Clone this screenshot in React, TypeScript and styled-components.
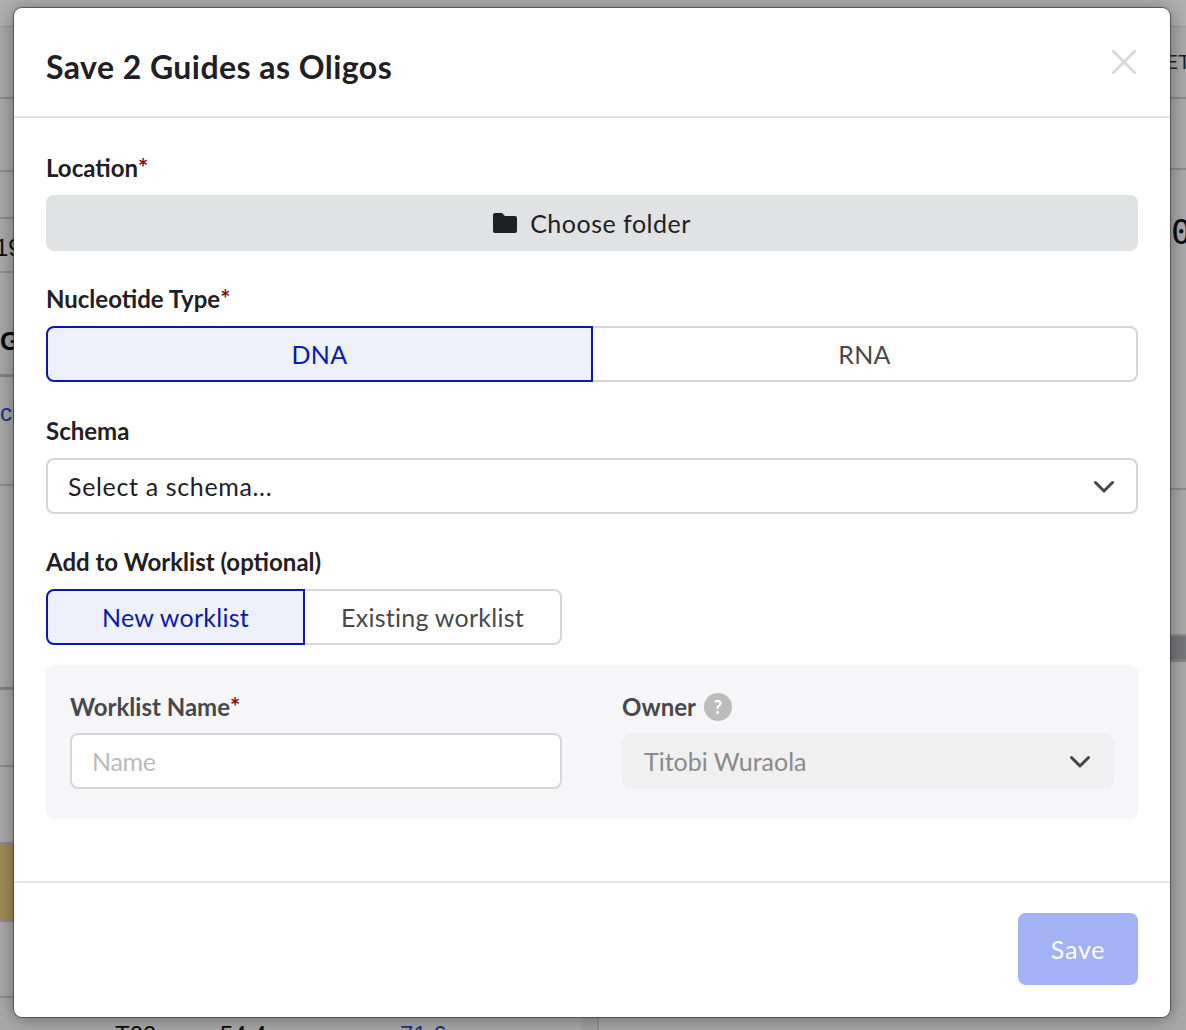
import React from "react";
import styled, { createGlobalStyle } from "styled-components";

const Global = createGlobalStyle`
  html, body { margin: 0; padding: 0; height: 100%; background: #fff; }
  * { box-sizing: border-box; }
  body { font-family: Lato, "Open Sans", Arial, sans-serif; color: #1f2024; }
`;

const Page = styled.div`
  position: relative;
  width: 1186px;
  height: 1030px;
  overflow: hidden;
  display: flex;
  flex-direction: column;
  background: #f1f1f1;
  font-family: "Liberation Sans", Arial, sans-serif;
`;
const TopBar = styled.div`
  height: 27px;
  flex: none;
  background: #fcfcfc;
  border-bottom: 1px solid #d8d8d8;
`;
const Panes = styled.div`
  flex: 1;
  display: flex;
  min-height: 0;
`;
const LeftPane = styled.div`
  width: 581px;
  flex: none;
  display: flex;
  flex-direction: column;
`;
const Scrollbar = styled.div`
  width: 18px;
  flex: none;
  background: #e4e4e4;
  border-right: 2px solid #cfcfcf;
`;
const RightPane = styled.div`
  flex: 1;
  display: flex;
  flex-direction: column;
`;
const Row = styled.div<{ $h: number; $thick?: boolean; $tint?: string; $left?: number; $top?: number; $bottom?: number }>`
  height: ${(p) => p.$h}px;
  flex: none;
  display: flex;
  align-items: center;
  padding: ${(p) => p.$top ?? 0}px 0 ${(p) => p.$bottom ?? 0}px ${(p) => p.$left ?? 0}px;
  overflow: hidden;
  white-space: nowrap;
  background: ${(p) => p.$tint ?? "transparent"};
  border-bottom: ${(p) => (p.$thick ? "3px solid #bcbcbc" : "2px solid #c9c9c9")};
  font-size: 24px;
  color: #111;
`;
const ClippedNumber = styled.span`
  margin-left: -5px;
`;
const BoldText = styled.span`
  font-weight: 700;
  font-size: 26px;
`;
const LinkText = styled.span`
  color: #2d46c4;
`;
const HeaderText = styled.span`
  font-size: 21px;
  color: #333;
`;
const MonoText = styled.span`
  font-family: "DejaVu Sans Mono", monospace;
  font-size: 34px;
`;
const BottomRow = styled.div`
  flex: 1;
  display: flex;
  padding: 25px 0 0 115px;
  font-size: 24px;
  line-height: 24px;
  color: #111;
  white-space: nowrap;
`;
const BottomCell = styled.span<{ $w: number }>`
  width: ${(p) => p.$w}px;
  flex: none;
`;

const Overlay = styled.div`
  position: absolute;
  inset: 0;
  background: rgba(0, 0, 0, 0.3);
  padding: 8px 16px 13px 14px;
  font-family: Lato, "Open Sans", Arial, sans-serif;
`;
const Modal = styled.div`
  width: 100%;
  height: 100%;
  display: flex;
  flex-direction: column;
  background: #fff;
  border-radius: 8px;
  box-shadow: 0 0 0 1px rgba(50, 50, 50, 0.6), 0 1px 18px rgba(0, 0, 0, 0.4);
`;
const Header = styled.header`
  height: 110px;
  flex: none;
  display: flex;
  align-items: center;
  justify-content: space-between;
  padding: 10px 34px 0 32px;
  border-bottom: 2px solid #e4e4e4;
`;
const Title = styled.h1`
  margin: 0;
  font-size: 32px;
  font-weight: 700;
  letter-spacing: 0.45px;
  line-height: 36px;
  color: #1f2024;
`;
const CloseButton = styled.button`
  display: flex;
  padding: 0;
  border: 0;
  background: none;
  margin-top: -11px;
`;
const Body = styled.div`
  flex: 1;
  padding: 38px 32px 0;
  display: flex;
  flex-direction: column;
`;
const Field = styled.div<{ $after?: number }>`
  display: flex;
  flex-direction: column;
  gap: 16px;
  margin-bottom: ${(p) => p.$after ?? 36}px;
`;
const Label = styled.label<{ $muted?: boolean }>`
  display: flex;
  align-items: center;
  gap: 8px;
  height: 23px;
  font-size: 24px;
  font-weight: 700;
  line-height: 24px;
  color: ${(p) => (p.$muted ? "#47484c" : "#1f2024")};
`;
const Required = styled.span`
  color: #7a1212;
  margin-left: -8px;
`;
const FolderButton = styled.button`
  height: 56px;
  display: flex;
  align-items: center;
  justify-content: center;
  gap: 13px;
  border: 0;
  border-radius: 8px;
  background: #e1e2e4;
  font: inherit;
  font-size: 25px;
  letter-spacing: 0.5px;
  color: #1f2024;
`;
const Segmented = styled.div<{ $width?: number }>`
  display: flex;
  height: 56px;
  width: ${(p) => (p.$width ? `${p.$width}px` : "100%")};
`;
const Segment = styled.button<{ $active?: boolean; $w?: number }>`
  flex: ${(p) => (p.$w ? `0 0 ${p.$w}px` : "1")};
  border: 2px solid ${(p) => (p.$active ? "#0a1aa8" : "#d6d6d6")};
  background: ${(p) => (p.$active ? "#eef0fb" : "#fff")};
  color: ${(p) => (p.$active ? "#0a1aa8" : "#47484c")};
  font: inherit;
  font-size: 25px;
  letter-spacing: 0.25px;
  padding: 0;
  &:first-child {
    border-radius: 8px 0 0 8px;
    ${(p) => (p.$active ? "" : "border-right: 0;")}
  }
  &:last-child {
    border-radius: 0 8px 8px 0;
    border-left: 0;
  }
`;
const SelectBox = styled.div<{ $disabled?: boolean }>`
  height: 56px;
  display: flex;
  align-items: center;
  justify-content: space-between;
  padding: 0 ${(p) => (p.$disabled ? 24 : 22)}px 0 ${(p) => (p.$disabled ? 22 : 20)}px;
  border-radius: 8px;
  border: ${(p) => (p.$disabled ? "0" : "2px solid #d6d6d6")};
  background: ${(p) => (p.$disabled ? "#f0f0f0" : "#fff")};
  color: ${(p) => (p.$disabled ? "#8a8a8a" : "#1f2024")};
  font-size: 25px;
  letter-spacing: ${(p) => (p.$disabled ? 0 : 0.65)}px;
`;
const WorklistPanel = styled.div`
  margin-top: -16px;
  height: 154px;
  padding: 30px 24px;
  display: grid;
  grid-template-columns: 492px 492px;
  column-gap: 60px;
  background: #f6f6f8;
  border-radius: 8px;
`;
const PanelField = styled.div`
  display: flex;
  flex-direction: column;
  gap: 15px;
`;
const NameInput = styled.input`
  height: 56px;
  width: 100%;
  padding: 0 20px;
  border: 2px solid #d6d6d6;
  border-radius: 8px;
  background: #fff;
  font: inherit;
  font-size: 25px;
  letter-spacing: -0.3px;
  &::placeholder {
    color: #bbb;
    opacity: 1;
  }
`;
const HelpBadge = styled.span`
  width: 28px;
  height: 28px;
  flex: none;
  display: flex;
  align-items: center;
  justify-content: center;
  border-radius: 50%;
  background: #bcbcbc;
  color: #fff;
  font-size: 18px;
  font-weight: 700;
`;
const Footer = styled.footer`
  height: 136px;
  flex: none;
  display: flex;
  justify-content: flex-end;
  padding: 30px 32px 0 0;
  border-top: 2px solid #e4e4e4;
`;
const SaveButton = styled.button`
  width: 120px;
  height: 72px;
  border: 0;
  border-radius: 8px;
  background: #a3b1f5;
  color: #fff;
  font: inherit;
  font-size: 25px;
  letter-spacing: 0.8px;
`;

const Chevron = () => (
  <svg width="20" height="14" viewBox="0 0 20 14" fill="none">
    <path d="M1.5 3.5 L10 12 L18.5 3.5" stroke="#47484c" strokeWidth="3" strokeLinecap="round" strokeLinejoin="round" />
  </svg>
);
const CloseIcon = () => (
  <svg width="24" height="24" viewBox="0 0 24 24" fill="none">
    <path d="M1.5 1.5 L22.5 22.5 M22.5 1.5 L1.5 22.5" stroke="#d8d8d8" strokeWidth="3" strokeLinecap="round" />
  </svg>
);
const FolderIcon = () => (
  <svg width="24" height="20" viewBox="0 0 24 20">
    <path
      d="M2 0 H9 L12 3 H22 A2 2 0 0 1 24 5 V18 A2 2 0 0 1 22 20 H2 A2 2 0 0 1 0 18 V2 A2 2 0 0 1 2 0 Z"
      fill="#1f2024"
    />
  </svg>
);

export default function App() {
  return (
    <>
      <Global />
      <Page>
        <TopBar />
        <Panes>
          <LeftPane>
            <Row $h={72} />
            <Row $h={73} />
            <Row $h={47} />
            <Row $h={54} $top={6}>
              <ClippedNumber>19</ClippedNumber>
            </Row>
            <Row $h={104} $thick $top={36}>
              <BoldText>G</BoldText>
            </Row>
            <Row $h={109} $bottom={35}>
              <LinkText>cl</LinkText>
            </Row>
            <Row $h={204} $thick />
            <Row $h={77} />
            <Row $h={77} />
            <Row $h={78} $tint="#e6c680" />
            <Row $h={76} />
            <BottomRow>
              <BottomCell $w={105}>T00</BottomCell>
              <BottomCell $w={180}>54.4</BottomCell>
              <LinkText>71.6</LinkText>
            </BottomRow>
          </LeftPane>
          <Scrollbar />
          <RightPane>
            <Row $h={72} $left={565}>
              <HeaderText>ET</HeaderText>
            </Row>
            <Row $h={71} />
            <Row $h={320} $left={572} $bottom={194}>
              <MonoText>0</MonoText>
            </Row>
            <Row $h={146} />
            <Row $h={26} $thick $tint="#a8a8b2" />
          </RightPane>
        </Panes>
        <Overlay>
          <Modal>
            <Header>
              <Title>Save 2 Guides as Oligos</Title>
              <CloseButton aria-label="Close">
                <CloseIcon />
              </CloseButton>
            </Header>
            <Body>
              <Field>
                <Label>
                  Location<Required>*</Required>
                </Label>
                <FolderButton>
                  <FolderIcon />
                  Choose folder
                </FolderButton>
              </Field>
              <Field $after={37}>
                <Label>
                  Nucleotide Type<Required>*</Required>
                </Label>
                <Segmented>
                  <Segment $active $w={547}>DNA</Segment>
                  <Segment>RNA</Segment>
                </Segmented>
              </Field>
              <Field>
                <Label>Schema</Label>
                <SelectBox>
                  Select a schema...
                  <Chevron />
                </SelectBox>
              </Field>
              <Field>
                <Label>Add to Worklist (optional)</Label>
                <Segmented $width={516}>
                  <Segment $active $w={259}>New worklist</Segment>
                  <Segment>Existing worklist</Segment>
                </Segmented>
              </Field>
              <WorklistPanel>
                <PanelField>
                  <Label $muted>
                    Worklist Name<Required>*</Required>
                  </Label>
                  <NameInput placeholder="Name" />
                </PanelField>
                <PanelField>
                  <Label $muted>
                    Owner
                    <HelpBadge>?</HelpBadge>
                  </Label>
                  <SelectBox $disabled>
                    Titobi Wuraola
                    <Chevron />
                  </SelectBox>
                </PanelField>
              </WorklistPanel>
            </Body>
            <Footer>
              <SaveButton>Save</SaveButton>
            </Footer>
          </Modal>
        </Overlay>
      </Page>
    </>
  );
}
